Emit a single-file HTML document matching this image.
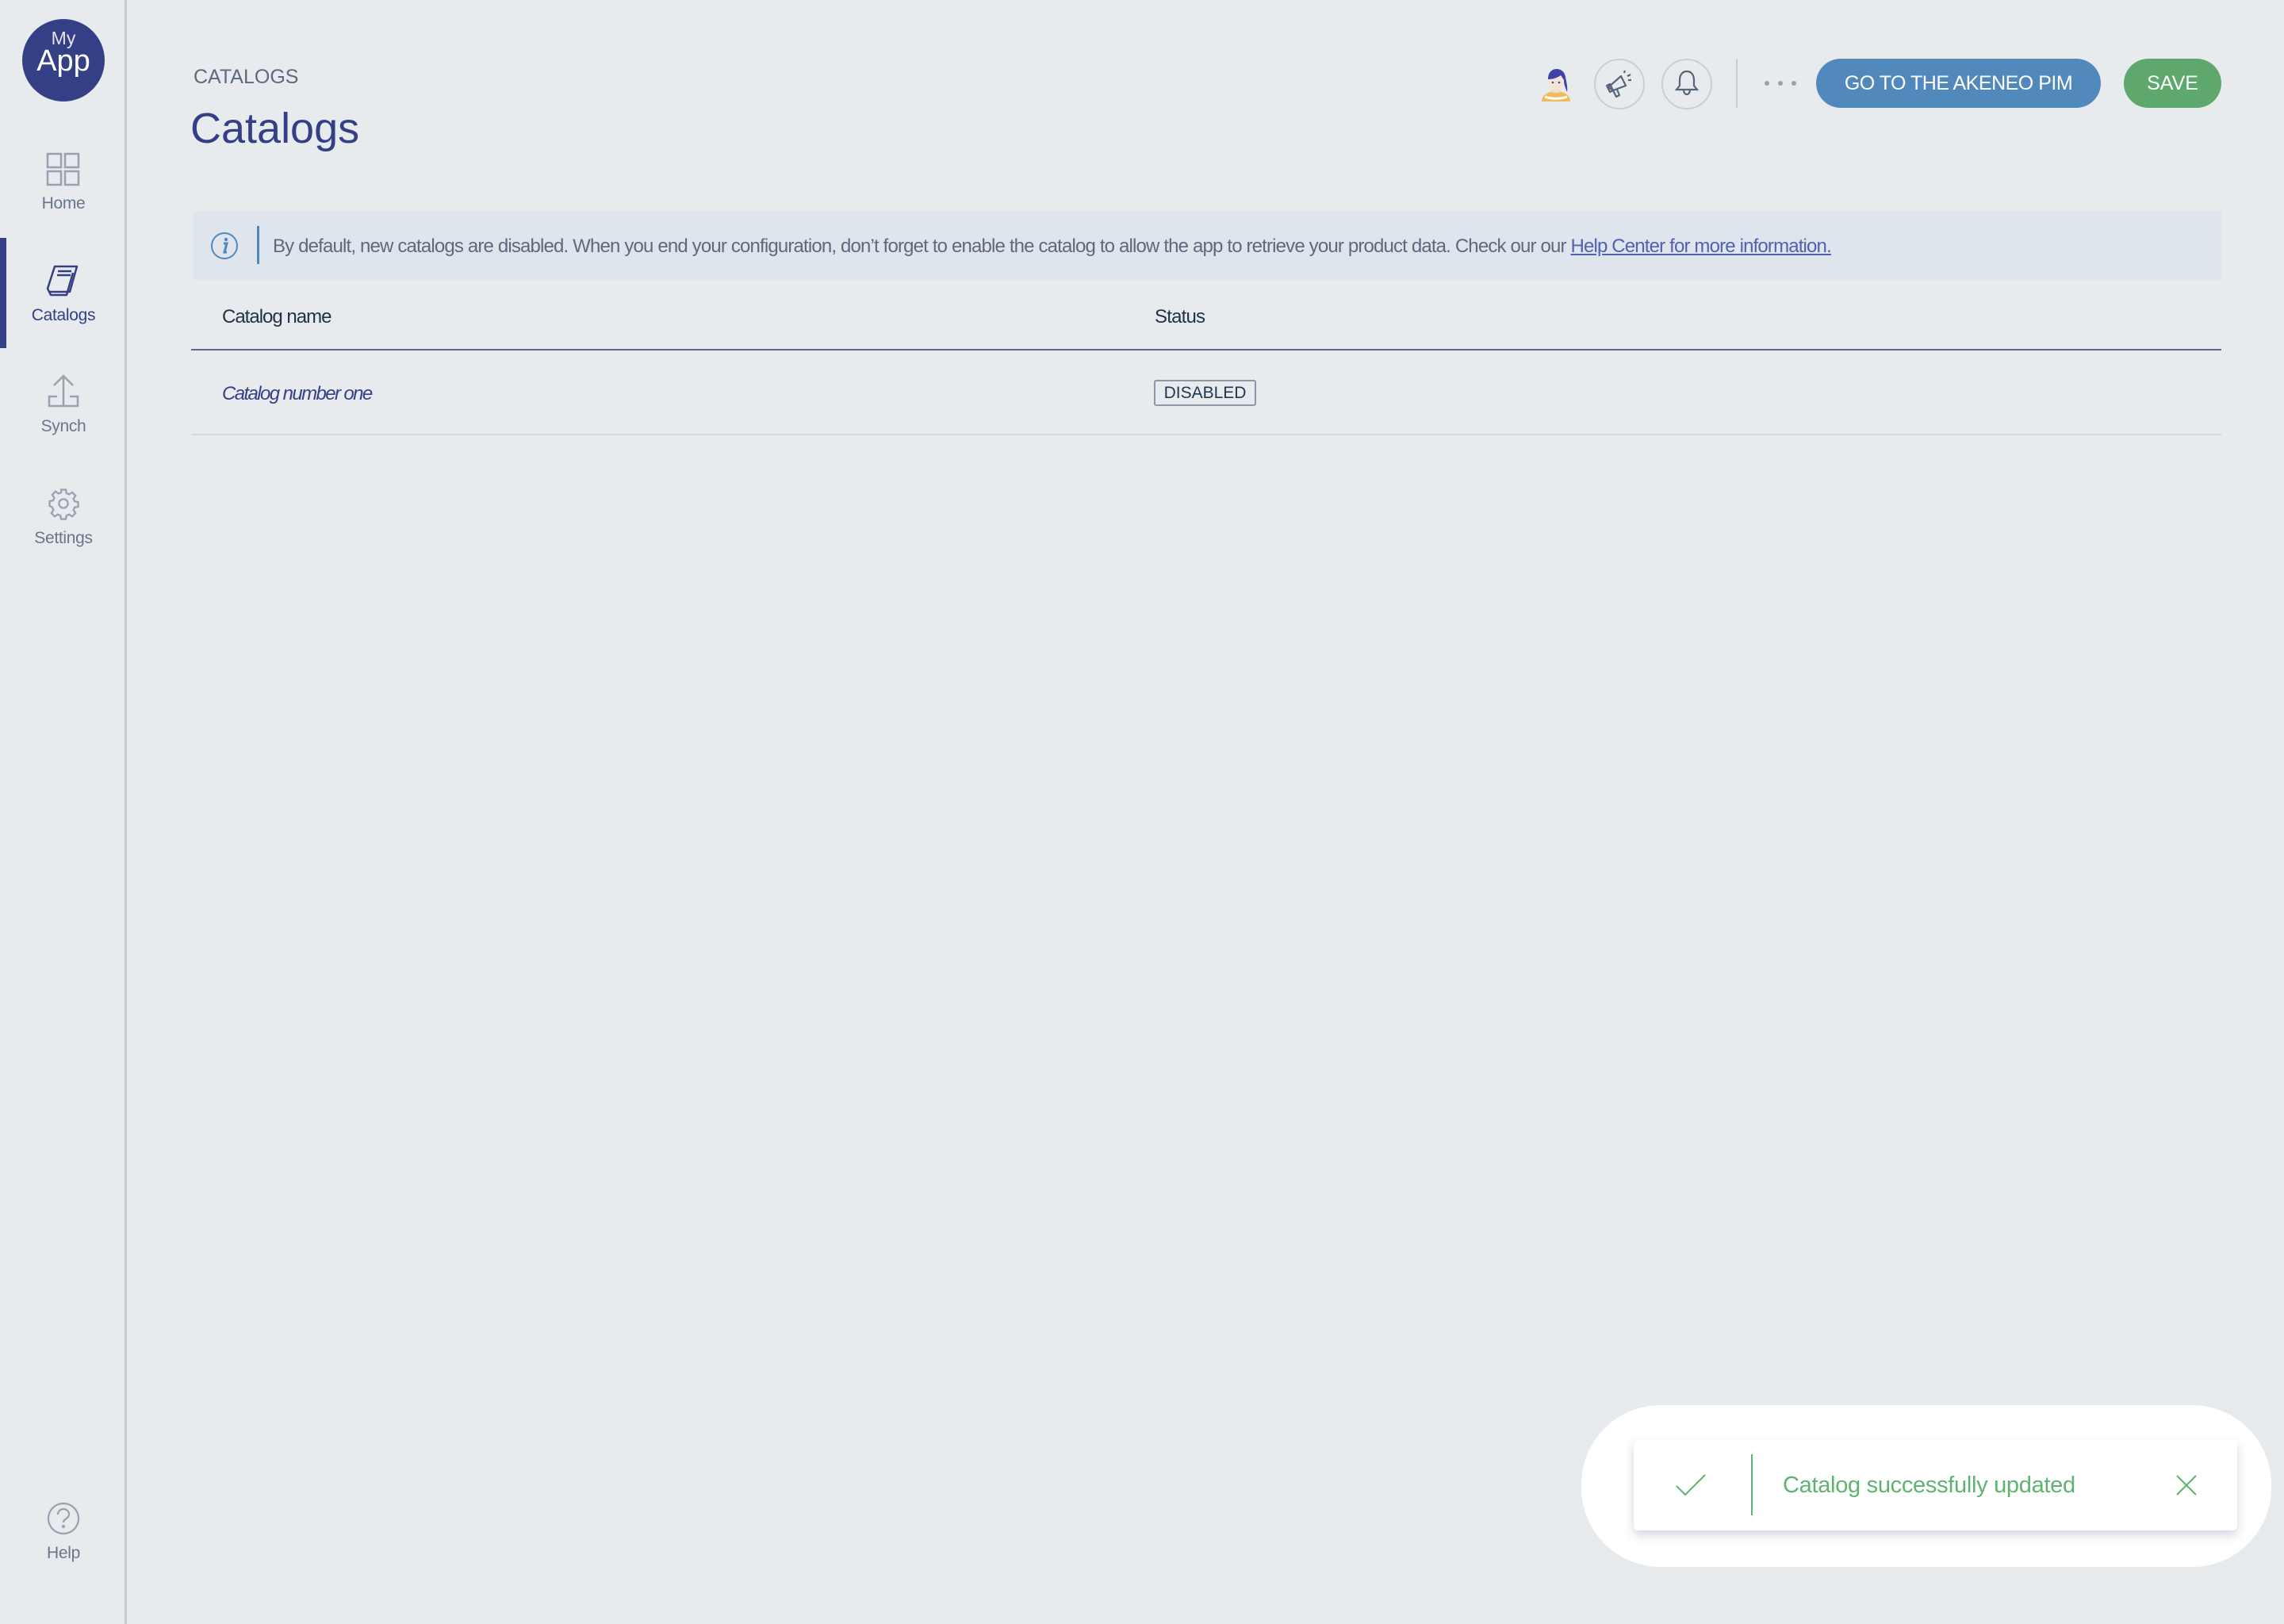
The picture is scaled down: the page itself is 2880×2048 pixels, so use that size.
<!DOCTYPE html>
<html><head><meta charset="utf-8"><style>
*{margin:0;padding:0;box-sizing:border-box}
body{width:2880px;height:2048px;background:#e8ebee;font-family:"Liberation Sans",sans-serif;position:relative;overflow:hidden}
.a{position:absolute}
.side{left:0;top:0;width:160px;height:2048px;border-right:3px solid #c3c9d2}
.lbl{width:160px;text-align:center;font-size:21px;color:#67768a;left:0;letter-spacing:-0.3px}
.t{white-space:nowrap}
</style></head><body>
<div class="a side"></div>
<div class="a" style="left:0;top:300px;width:8px;height:139px;background:#353f85"></div>
<div class="a" style="left:28px;top:24px;width:104px;height:104px;border-radius:50%;background:#353f85;color:#fff;text-align:center">
 <div style="font-size:23px;margin-top:12px;line-height:24px;color:#e3e5f0">My</div>
 <div style="font-size:38px;line-height:38px;margin-top:-2px">App</div>
</div>
<svg class="a" style="left:58px;top:192px" width="44" height="44" viewBox="0 0 44 44" fill="none" stroke="#98a1b0" stroke-width="2.5"><rect x="2" y="2" width="17" height="17"/><rect x="24" y="2" width="17" height="17"/><rect x="2" y="24" width="17" height="17"/><rect x="24" y="24" width="17" height="17"/></svg>
<div class="a lbl" style="top:245px">Home</div>
<svg class="a" style="left:58px;top:334px" width="44" height="40" viewBox="0 0 44 40" fill="none" stroke="#353f85" stroke-width="2.5" stroke-linejoin="round"><path d="M11 2h28l-9 32H4L2 30z M4 34l-2-4 M11 2L2 30"/><path d="M15 8h17M14 13h17M34 10l-8 28H6l-2-4"/></svg>
<div class="a lbl" style="top:386px;color:#353f85">Catalogs</div>
<svg class="a" style="left:60px;top:472px" width="40" height="44" viewBox="0 0 40 44" fill="none" stroke="#98a1b0" stroke-width="2.5"><path d="M20 4v36M8 14L20 2l12 12M12 28H2v12h36V28H28"/></svg>
<div class="a lbl" style="top:526px">Synch</div>
<svg class="a" style="left:59px;top:614px" width="42" height="42" viewBox="0 0 24 24" fill="none" stroke="#98a1b0" stroke-width="1.3"><circle cx="12" cy="12" r="3.2"/><path d="M10.3 2h3.4l.5 2.6 1.9.8 2.2-1.5 2.4 2.4-1.5 2.2.8 1.9 2.6.5v3.4l-2.6.5-.8 1.9 1.5 2.2-2.4 2.4-2.2-1.5-1.9.8-.5 2.6h-3.4l-.5-2.6-1.9-.8-2.2 1.5-2.4-2.4 1.5-2.2-.8-1.9L2 13.7v-3.4l2.6-.5.8-1.9-1.5-2.2 2.4-2.4 2.2 1.5 1.9-.8z"/></svg>
<div class="a lbl" style="top:667px">Settings</div>
<svg class="a" style="left:59px;top:1894px" width="42" height="42" viewBox="0 0 42 42" fill="none" stroke="#98a1b0" stroke-width="2.2"><circle cx="21" cy="21" r="19"/><path d="M14 16c0-4 3-7 7-7s7 3 7 7c0 5-7 5-7 10"/><circle cx="21" cy="31" r="1" fill="#98a1b0"/></svg>
<div class="a lbl" style="top:1947px">Help</div>

<div class="a t" style="left:244px;top:83px;font-size:25px;color:#5c6a7e">CATALOGS</div>
<div class="a t" style="left:240px;top:131px;font-size:54px;color:#353f85">Catalogs</div>

<svg class="a" style="left:1938px;top:80px" width="48" height="52" viewBox="0 0 48 52"><path d="M6 48c0-8 8-13 18-13s18 5 18 13z" fill="#f0bb5a"/><path d="M10 42c8 3 20 3 28 0" stroke="#fff" stroke-width="3" fill="none"/><rect x="19" y="28" width="10" height="9" fill="#f3dcc8"/><ellipse cx="24" cy="22" rx="10" ry="12" fill="#f3e4d6"/><path d="M14 20c0-9 5-13 11-13 6 0 10 4 11 10 1 6 3 13 2 19-2-5-4-9-4-15-2-3-3-5-4-6-4 3-10 5-16 5z" fill="#3d43a8"/><circle cx="20" cy="24" r="1.3" fill="#3d43a8"/><circle cx="28" cy="24" r="1.3" fill="#3d43a8"/></svg>
<div class="a" style="left:2010px;top:74px;width:64px;height:64px;border-radius:50%;border:2.5px solid #c9ced6"></div>
<svg class="a" style="left:2022px;top:86px" width="40" height="40" viewBox="0 0 40 40" fill="none" stroke="#57657a" stroke-width="2.2" stroke-linejoin="round"><path d="M6 24l16-14 6 12-16 6z M4 22l4 8 4-2-4-8z M12 28l4 8 4-2-3-7"/><path d="M26 6l1-3M30 10l4-2M31 15h4"/></svg>
<div class="a" style="left:2095px;top:74px;width:64px;height:64px;border-radius:50%;border:2.5px solid #c9ced6"></div>
<svg class="a" style="left:2111px;top:88px" width="32" height="36" viewBox="0 0 32 36" fill="none" stroke="#57657a" stroke-width="2.2"><path d="M16 2c-6 0-9 5-9 11v7l-4 5h26l-4-5v-7c0-6-3-11-9-11z M12 25c0 4 2 6 4 6s4-2 4-6"/></svg>
<div class="a" style="left:2189px;top:74px;width:2px;height:62px;background:#c9ced6"></div>
<div class="a" style="left:2225px;top:102px;width:6px;height:6px;border-radius:50%;background:#98a1b0;box-shadow:17px 0 #98a1b0,34px 0 #98a1b0"></div>
<div class="a t" style="left:2290px;top:74px;width:359px;height:62px;border-radius:31px;background:#5289bd;color:#fff;font-size:25px;line-height:62px;text-align:center;letter-spacing:-0.5px">GO TO THE AKENEO PIM</div>
<div class="a t" style="left:2678px;top:74px;width:123px;height:62px;border-radius:31px;background:#5ea86d;color:#fff;font-size:25px;line-height:62px;text-align:center">SAVE</div>

<div class="a" style="left:244px;top:266px;width:2557px;height:87px;background:#dfe5ec"></div>
<svg class="a" style="left:265px;top:292px" width="36" height="36" viewBox="0 0 36 36"><circle cx="18" cy="18" r="16" fill="none" stroke="#5289bd" stroke-width="2"/><circle cx="20" cy="10" r="2.2" fill="#5289bd"/><path d="M17 15h4l-3 11h3" stroke="#5289bd" stroke-width="3" fill="none"/></svg>
<div class="a" style="left:324px;top:285px;width:3px;height:48px;background:#5289bd"></div>
<div class="a t" style="left:344px;top:297px;font-size:24px;color:#5d6a7e;letter-spacing:-0.84px">By default, new catalogs are disabled. When you end your configuration, don’t forget to enable the catalog to allow the app to retrieve your product data. Check our our <span style="color:#5460b0;text-decoration:underline">Help Center for more information.</span></div>

<div class="a t" style="left:280px;top:386px;font-size:24px;color:#1f3048;letter-spacing:-1px">Catalog name</div>
<div class="a t" style="left:1456px;top:386px;font-size:24px;color:#1f3048;letter-spacing:-0.8px">Status</div>
<div class="a" style="left:241px;top:440px;width:2560px;height:2px;background:#5b6a80"></div>
<div class="a t" style="left:280px;top:483px;font-size:24px;color:#353f85;font-style:italic;letter-spacing:-1.6px">Catalog number one</div>
<div class="a t" style="left:1455px;top:479px;width:129px;height:33px;border:2px solid #8c97a8;border-radius:3px;font-size:21px;line-height:29px;text-align:center;color:#1f3550">DISABLED</div>
<div class="a" style="left:241px;top:547px;width:2560px;height:2px;background:#d6dae0"></div>

<div class="a" style="left:1994px;top:1772px;width:870px;height:204px;border-radius:100px;background:#fff"></div>
<div class="a" style="left:2060px;top:1816px;width:761px;height:114px;border-radius:6px;background:#fff;box-shadow:0 6px 12px rgba(60,70,110,0.22)"></div>
<svg class="a" style="left:2112px;top:1858px" width="40" height="30" viewBox="0 0 40 30" fill="none" stroke="#5fb36e" stroke-width="2"><path d="M2 16l11 11L38 2"/></svg>
<div class="a" style="left:2208px;top:1834px;width:2px;height:77px;background:#5fb36e"></div>
<div class="a t" style="left:2248px;top:1857px;font-size:29px;color:#5fb36e;letter-spacing:-0.3px">Catalog successfully updated</div>
<svg class="a" style="left:2743px;top:1859px" width="28" height="28" viewBox="0 0 28 28" stroke="#5fb36e" stroke-width="2"><path d="M2 2l24 24M26 2L2 26"/></svg>
</body></html>
